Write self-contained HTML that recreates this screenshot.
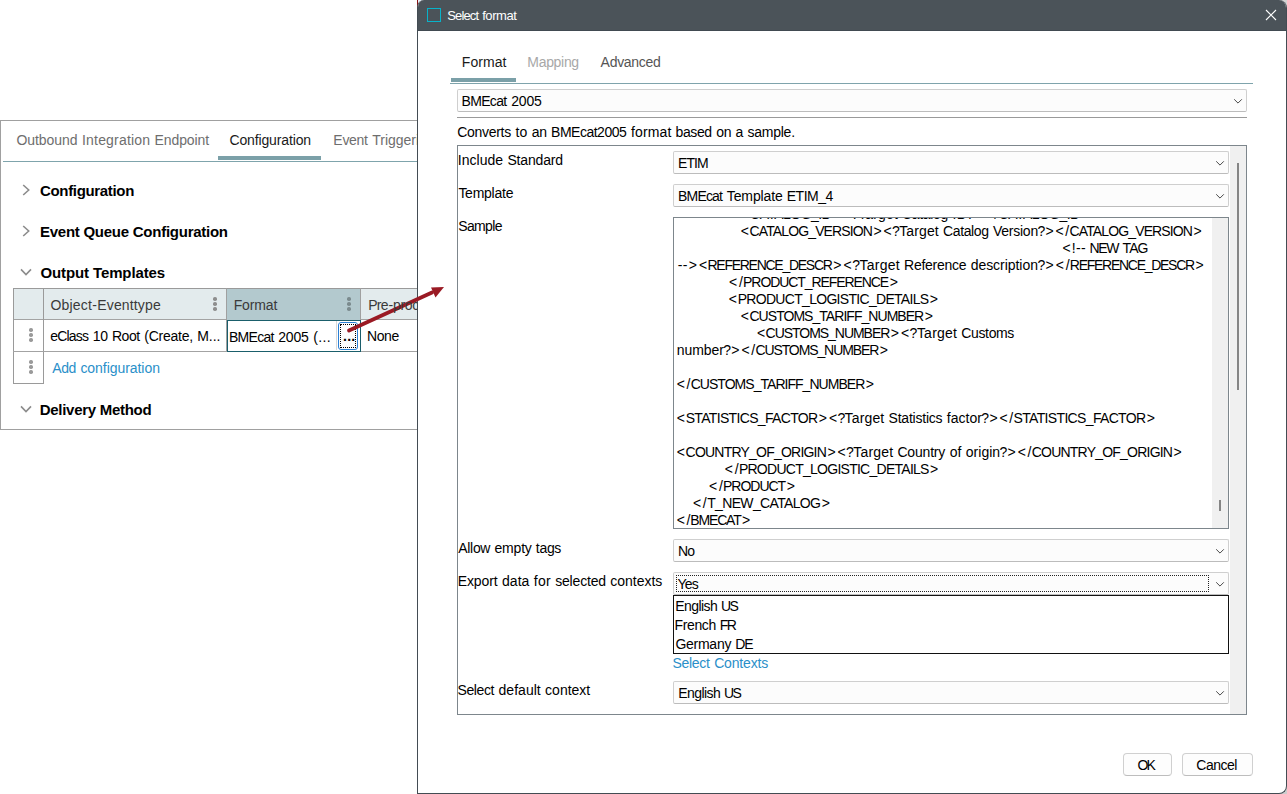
<!DOCTYPE html>
<html lang="en"><head><meta charset="utf-8"><title>Select format</title>
<style>
html,body{margin:0;padding:0;background:#fff;}
body{width:1287px;height:794px;position:relative;overflow:hidden;font-family:"Liberation Sans",sans-serif;font-size:14px;color:#000;}
.a{position:absolute;box-sizing:border-box;}
.t{position:absolute;white-space:pre;line-height:20px;height:20px;}
.t i{font-style:normal;display:inline-block;}
.sel{position:absolute;box-sizing:border-box;border:1px solid #cfcfcf;border-bottom-color:#bcbcbc;border-radius:2px;background:#fcfcfc;}
.dots{position:absolute;width:2px;}
.dots i{position:absolute;left:0;width:3px;height:3px;border-radius:50%;background:#8c8c8c;}
.btn{position:absolute;box-sizing:border-box;border:1px solid #d0d0d0;border-radius:4px;background:#fdfdfd;border-bottom-color:#bdbdbd;}
</style></head><body>

<div class="a" id="lp" style="left:0;top:120px;width:420px;height:310px;border:1px solid #a0a0a0;background:#fff;"></div>
<div class="a" style="left:3px;top:161px;width:415px;height:1px;background:#7fa4ac;"></div>
<div class="a" style="left:218px;top:156px;width:103px;height:4px;background:#7ba0a8;"></div>
<svg class="a" style="left:20px;top:182px" width="12" height="16" viewBox="0 0 12 16"><path d="M3.2 3 L8.7 8 L3.2 13" fill="none" stroke="#8c8c8c" stroke-width="1.6"/></svg>
<svg class="a" style="left:20px;top:223px" width="12" height="16" viewBox="0 0 12 16"><path d="M3.2 3 L8.7 8 L3.2 13" fill="none" stroke="#8c8c8c" stroke-width="1.6"/></svg>
<svg class="a" style="left:18px;top:266px" width="16" height="12" viewBox="0 0 16 12"><path d="M3 3.4 L8 8.5 L13 3.4" fill="none" stroke="#8c8c8c" stroke-width="1.6"/></svg>
<svg class="a" style="left:18px;top:403px" width="16" height="12" viewBox="0 0 16 12"><path d="M3 3.4 L8 8.5 L13 3.4" fill="none" stroke="#8c8c8c" stroke-width="1.6"/></svg>
<div class="a" style="left:13px;top:288px;width:407px;height:32px;background:#e3ebed;border-top:1px solid #9a9a9a;border-bottom:1px solid #a3a3a3;"></div>
<div class="a" style="left:227px;top:289px;width:134px;height:31px;background:#b3c9ce;"></div>
<div class="a" style="left:13px;top:288px;width:1px;height:96px;background:#9a9a9a;"></div>
<div class="a" style="left:43px;top:288px;width:1px;height:96px;background:#9a9a9a;"></div>
<div class="a" style="left:226px;top:288px;width:1px;height:64px;background:#a0a0a0;"></div>
<div class="a" style="left:360px;top:288px;width:1px;height:64px;background:#a0a0a0;"></div>
<div class="a" style="left:13px;top:351px;width:407px;height:1px;background:#a3a3a3;"></div>
<div class="a" style="left:13px;top:383px;width:31px;height:1px;background:#9a9a9a;"></div>
<div class="a" style="left:227px;top:320px;width:134px;height:32px;border:1px solid #1a5e6b;background:#fff;"></div>
<div class="a" style="left:336px;top:321px;width:1px;height:29px;background:#d8d8d8;"></div>
<div class="a" style="left:338px;top:322px;width:20px;height:28px;border:1px solid #2a7fd4;border-radius:3px;background:#fdfdfd;"></div>
<div class="a" style="left:340px;top:324px;width:16px;height:24px;border:1px dotted #000;"></div>
<span class="t" style="left:343px;top:326px;font-size:14px;font-weight:700;letter-spacing:0.25px;color:#000;">...</span>
<div class="dots" style="left:213.2px;top:297.2px;height:13.6px;"><i style="top:0px;width:3.6px;height:3.6px;background:#8e8e8e"></i><i style="top:5px;width:3.6px;height:3.6px;background:#8e8e8e"></i><i style="top:10px;width:3.6px;height:3.6px;background:#8e8e8e"></i></div>
<div class="dots" style="left:347.2px;top:297.2px;height:13.6px;"><i style="top:0px;width:3.6px;height:3.6px;background:#7b8b8e"></i><i style="top:5px;width:3.6px;height:3.6px;background:#7b8b8e"></i><i style="top:10px;width:3.6px;height:3.6px;background:#7b8b8e"></i></div>
<div class="dots" style="left:29.3px;top:328.3px;height:13.4px;"><i style="top:0px;width:3.4px;height:3.4px;background:#9a9a9a"></i><i style="top:5px;width:3.4px;height:3.4px;background:#9a9a9a"></i><i style="top:10px;width:3.4px;height:3.4px;background:#9a9a9a"></i></div>
<div class="dots" style="left:29.3px;top:360.3px;height:13.4px;"><i style="top:0px;width:3.4px;height:3.4px;background:#9a9a9a"></i><i style="top:5px;width:3.4px;height:3.4px;background:#9a9a9a"></i><i style="top:10px;width:3.4px;height:3.4px;background:#9a9a9a"></i></div>
<div class="a" style="left:1277px;top:0;width:10px;height:10px;background:#d4d4d4;"></div><div class="a" style="left:1277px;top:784px;width:10px;height:10px;background:#cdcdcd;"></div><div class="a" style="left:417px;top:0;width:8px;height:7px;background:#e8eef8;border-left:1px solid #8a1010;"></div><div class="a" id="dlg" style="left:417px;top:0;width:870px;height:794px;border:1px solid #434c53;border-top:none;border-radius:7px 8px 8px 0;background:#fff;overflow:hidden;"><div class="a" style="left:-1px;top:0;width:870px;height:31px;background:#4b5359;border-bottom:1px solid #414a51;"></div></div>
<div class="a" style="left:427px;top:8px;width:14px;height:14px;border:1.5px solid #08b3ca;"></div>
<svg class="a" style="left:1264px;top:8px" width="14" height="14" viewBox="0 0 14 14"><path d="M2 2 L12 12 M12 2 L2 12" stroke="#fff" stroke-width="1.1" fill="none"/></svg>
<div class="a" style="left:450px;top:83px;width:803px;height:1px;background:#7fa4ac;"></div>
<div class="a" style="left:451px;top:78px;width:65px;height:4px;background:#7ba0a8;"></div>
<div class="sel" style="left:457px;top:89px;width:790px;height:23px;"></div><svg class="a" style="left:1232px;top:95.8px" width="12" height="10" viewBox="0 0 12 10"><path d="M2.2 3.3 L6 7.1 L9.8 3.3" fill="none" stroke="#4a4a4a" stroke-width="1"/></svg>
<div class="a" style="left:457px;top:117px;width:790px;height:1px;background:#9a9a9a;"></div>
<div class="a" style="left:457px;top:145px;width:790px;height:570px;border:1px solid #7d868c;background:#fff;"></div>
<div class="a" style="left:1230px;top:146px;width:16px;height:568px;background:#f0f0f0;"></div>
<div class="a" style="left:1237px;top:163px;width:2px;height:227px;background:#858585;"></div>
<div class="sel" style="left:673px;top:151px;width:556px;height:23px;"></div><svg class="a" style="left:1214px;top:157.8px" width="12" height="10" viewBox="0 0 12 10"><path d="M2.2 3.3 L6 7.1 L9.8 3.3" fill="none" stroke="#4a4a4a" stroke-width="1"/></svg>
<div class="sel" style="left:673px;top:184px;width:556px;height:23px;"></div><svg class="a" style="left:1214px;top:190.8px" width="12" height="10" viewBox="0 0 12 10"><path d="M2.2 3.3 L6 7.1 L9.8 3.3" fill="none" stroke="#4a4a4a" stroke-width="1"/></svg>
<div class="a keep" id="ta" style="left:673px;top:217px;width:556px;height:312px;border:1px solid #7d868c;background:#fff;overflow:hidden;">
<div class="a" style="left:538px;top:0;width:16px;height:310px;background:#f0f0f0;"></div>
<div class="a" style="left:545px;top:282px;width:2px;height:11px;background:#858585;"></div>
<span class="t" id="ta0" style="left:66.3px;top:-14px;font-size:14px;color:#000;"><i id="ta0_0" style="letter-spacing:1.884px;margin:0 -0.942px 0 0.942px">&lt;</i><i id="ta0_1" style="letter-spacing:-0.562px;margin:0 0.281px 0 -0.281px">CATALOG_ID</i><i id="ta0_2" style="letter-spacing:1.884px;margin:0 -0.942px 0 0.942px">&gt;</i><i id="ta0_3" style="letter-spacing:1.884px;margin:0 -0.942px 0 0.942px">&lt;</i><i id="ta0_4" style="letter-spacing:-1.229px;margin:0 0.615px 0 -0.615px">?</i><i id="ta0_5" style="letter-spacing:0.16px;margin:0 -0.08px 0 0.08px">Target</i><i id="ta0_6" style="letter-spacing:0.439px;margin:0 -0.22px 0 0.22px"> </i><i id="ta0_7" style="letter-spacing:-0.353px;margin:0 0.176px 0 -0.176px">Catalog</i><i id="ta0_8" style="letter-spacing:0.439px;margin:0 -0.22px 0 0.22px"> </i><i id="ta0_9" style="letter-spacing:0.267px;margin:0 -0.134px 0 0.134px">ID</i><i id="ta0_10" style="letter-spacing:-1.229px;margin:0 0.615px 0 -0.615px">?</i><i id="ta0_11" style="letter-spacing:1.884px;margin:0 -0.942px 0 0.942px">&gt;</i><i id="ta0_12" style="letter-spacing:1.884px;margin:0 -0.942px 0 0.942px">&lt;</i><i id="ta0_13" style="letter-spacing:1.383px;margin:0 -0.692px 0 0.692px">/</i><i id="ta0_14" style="letter-spacing:-0.562px;margin:0 0.281px 0 -0.281px">CATALOG_ID</i><i id="ta0_15" style="letter-spacing:1.884px;margin:0 -0.942px 0 0.942px">&gt;</i></span>
<span class="t" id="ta1" style="left:65.9px;top:3px;font-size:14px;color:#000;"><i id="ta1_0" style="letter-spacing:1.853px;margin:0 -0.926px 0 0.926px">&lt;</i><i id="ta1_1" style="letter-spacing:-0.87px;margin:0 0.435px 0 -0.435px">CATALOG_VERSION</i><i id="ta1_2" style="letter-spacing:1.853px;margin:0 -0.926px 0 0.926px">&gt;</i><i id="ta1_3" style="letter-spacing:1.853px;margin:0 -0.926px 0 0.926px">&lt;</i><i id="ta1_4" style="letter-spacing:-1.257px;margin:0 0.628px 0 -0.628px">?</i><i id="ta1_5" style="letter-spacing:0.139px;margin:0 -0.07px 0 0.07px">Target</i><i id="ta1_6" style="letter-spacing:0.417px;margin:0 -0.208px 0 0.208px"> </i><i id="ta1_7" style="letter-spacing:-0.373px;margin:0 0.186px 0 -0.186px">Catalog</i><i id="ta1_8" style="letter-spacing:0.417px;margin:0 -0.208px 0 0.208px"> </i><i id="ta1_9" style="letter-spacing:-0.251px;margin:0 0.126px 0 -0.126px">Version</i><i id="ta1_10" style="letter-spacing:-1.257px;margin:0 0.628px 0 -0.628px">?</i><i id="ta1_11" style="letter-spacing:1.853px;margin:0 -0.926px 0 0.926px">&gt;</i><i id="ta1_12" style="letter-spacing:1.853px;margin:0 -0.926px 0 0.926px">&lt;</i><i id="ta1_13" style="letter-spacing:1.364px;margin:0 -0.682px 0 0.682px">/</i><i id="ta1_14" style="letter-spacing:-0.87px;margin:0 0.435px 0 -0.435px">CATALOG_VERSION</i><i id="ta1_15" style="letter-spacing:1.853px;margin:0 -0.926px 0 0.926px">&gt;</i></span>
<span class="t" id="ta2" style="left:387.7px;top:20px;font-size:14px;color:#000;"><i id="ta2_0" style="letter-spacing:1.652px;margin:0 -0.826px 0 0.826px">&lt;</i><i id="ta2_1" style="letter-spacing:0.355px;margin:0 -0.177px 0 0.177px">!--</i><i id="ta2_2" style="letter-spacing:0.329px;margin:0 -0.165px 0 0.165px"> </i><i id="ta2_3" style="letter-spacing:-1.3px;margin:0 0.65px 0 -0.65px">NEW</i><i id="ta2_4" style="letter-spacing:0.329px;margin:0 -0.165px 0 0.165px"> </i><i id="ta2_5" style="letter-spacing:-0.914px;margin:0 0.457px 0 -0.457px">TAG</i></span>
<span class="t" id="ta3" style="left:3.5px;top:37px;font-size:14px;color:#000;"><i id="ta3_0" style="letter-spacing:0.431px;margin:0 -0.215px 0 0.215px">--</i><i id="ta3_1" style="letter-spacing:2.043px;margin:0 -1.022px 0 1.022px">&gt;</i><i id="ta3_2" style="letter-spacing:2.043px;margin:0 -1.022px 0 1.022px">&lt;</i><i id="ta3_3" style="letter-spacing:-1.271px;margin:0 0.635px 0 -0.635px">REFERENCE_DESCR</i><i id="ta3_4" style="letter-spacing:2.043px;margin:0 -1.022px 0 1.022px">&gt;</i><i id="ta3_5" style="letter-spacing:2.043px;margin:0 -1.022px 0 1.022px">&lt;</i><i id="ta3_6" style="letter-spacing:-1.145px;margin:0 0.573px 0 -0.573px">?</i><i id="ta3_7" style="letter-spacing:0.256px;margin:0 -0.128px 0 0.128px">Target</i><i id="ta3_8" style="letter-spacing:0.491px;margin:0 -0.245px 0 0.245px"> </i><i id="ta3_9" style="letter-spacing:-0.28px;margin:0 0.14px 0 -0.14px">Reference</i><i id="ta3_10" style="letter-spacing:0.491px;margin:0 -0.245px 0 0.245px"> </i><i id="ta3_11" style="letter-spacing:-0.04px;margin:0 0.02px 0 -0.02px">description</i><i id="ta3_12" style="letter-spacing:-1.145px;margin:0 0.573px 0 -0.573px">?</i><i id="ta3_13" style="letter-spacing:2.043px;margin:0 -1.022px 0 1.022px">&gt;</i><i id="ta3_14" style="letter-spacing:2.043px;margin:0 -1.022px 0 1.022px">&lt;</i><i id="ta3_15" style="letter-spacing:1.467px;margin:0 -0.734px 0 0.734px">/</i><i id="ta3_16" style="letter-spacing:-1.271px;margin:0 0.635px 0 -0.635px">REFERENCE_DESCR</i><i id="ta3_17" style="letter-spacing:2.043px;margin:0 -1.022px 0 1.022px">&gt;</i></span>
<span class="t" id="ta4" style="left:53.9px;top:54px;font-size:14px;color:#000;"><i id="ta4_0" style="letter-spacing:2.151px;margin:0 -1.075px 0 1.075px">&lt;</i><i id="ta4_1" style="letter-spacing:1.522px;margin:0 -0.761px 0 0.761px">/</i><i id="ta4_2" style="letter-spacing:-1.08px;margin:0 0.54px 0 -0.54px">PRODUCT_REFERENCE</i><i id="ta4_3" style="letter-spacing:2.151px;margin:0 -1.075px 0 1.075px">&gt;</i></span>
<span class="t" id="ta5" style="left:53.9px;top:71px;font-size:14px;color:#000;"><i id="ta5_0" style="letter-spacing:1.958px;margin:0 -0.979px 0 0.979px">&lt;</i><i id="ta5_1" style="letter-spacing:-0.696px;margin:0 0.348px 0 -0.348px">PRODUCT_LOGISTIC_DETAILS</i><i id="ta5_2" style="letter-spacing:1.958px;margin:0 -0.979px 0 0.979px">&gt;</i></span>
<span class="t" id="ta6" style="left:65.9px;top:88px;font-size:14px;color:#000;"><i id="ta6_0" style="letter-spacing:1.844px;margin:0 -0.922px 0 0.922px">&lt;</i><i id="ta6_1" style="letter-spacing:-0.959px;margin:0 0.479px 0 -0.479px">CUSTOMS_TARIFF_NUMBER</i><i id="ta6_2" style="letter-spacing:1.844px;margin:0 -0.922px 0 0.922px">&gt;</i></span>
<span class="t" id="ta7" style="left:81.9px;top:105px;font-size:14px;color:#000;"><i id="ta7_0" style="letter-spacing:1.997px;margin:0 -0.999px 0 0.999px">&lt;</i><i id="ta7_1" style="letter-spacing:-1.036px;margin:0 0.518px 0 -0.518px">CUSTOMS_NUMBER</i><i id="ta7_2" style="letter-spacing:1.997px;margin:0 -0.999px 0 0.999px">&gt;</i><i id="ta7_3" style="letter-spacing:1.997px;margin:0 -0.999px 0 0.999px">&lt;</i><i id="ta7_4" style="letter-spacing:-1.171px;margin:0 0.586px 0 -0.586px">?</i><i id="ta7_5" style="letter-spacing:0.232px;margin:0 -0.116px 0 0.116px">Target</i><i id="ta7_6" style="letter-spacing:0.483px;margin:0 -0.241px 0 0.241px"> </i><i id="ta7_7" style="letter-spacing:-0.363px;margin:0 0.181px 0 -0.181px">Customs</i></span>
<span class="t" id="ta8" style="left:2.7px;top:122px;font-size:14px;color:#000;"><i id="ta8_0" style="letter-spacing:-0.056px;margin:0 0.028px 0 -0.028px">number</i><i id="ta8_1" style="letter-spacing:-1.219px;margin:0 0.61px 0 -0.61px">?</i><i id="ta8_2" style="letter-spacing:1.928px;margin:0 -0.964px 0 0.964px">&gt;</i><i id="ta8_3" style="letter-spacing:1.928px;margin:0 -0.964px 0 0.964px">&lt;</i><i id="ta8_4" style="letter-spacing:1.405px;margin:0 -0.703px 0 0.703px">/</i><i id="ta8_5" style="letter-spacing:-1.099px;margin:0 0.549px 0 -0.549px">CUSTOMS_NUMBER</i><i id="ta8_6" style="letter-spacing:1.928px;margin:0 -0.964px 0 0.964px">&gt;</i></span>
<span class="t" id="ta9" style="left:1.9px;top:156px;font-size:14px;color:#000;"><i id="ta9_0" style="letter-spacing:1.838px;margin:0 -0.919px 0 0.919px">&lt;</i><i id="ta9_1" style="letter-spacing:1.358px;margin:0 -0.679px 0 0.679px">/</i><i id="ta9_2" style="letter-spacing:-0.968px;margin:0 0.484px 0 -0.484px">CUSTOMS_TARIFF_NUMBER</i><i id="ta9_3" style="letter-spacing:1.838px;margin:0 -0.919px 0 0.919px">&gt;</i></span>
<span class="t" id="ta10" style="left:1.9px;top:190px;font-size:14px;color:#000;"><i id="ta10_0" style="letter-spacing:1.875px;margin:0 -0.938px 0 0.938px">&lt;</i><i id="ta10_1" style="letter-spacing:-0.66px;margin:0 0.33px 0 -0.33px">STATISTICS_FACTOR</i><i id="ta10_2" style="letter-spacing:1.875px;margin:0 -0.938px 0 0.938px">&gt;</i><i id="ta10_3" style="letter-spacing:1.875px;margin:0 -0.938px 0 0.938px">&lt;</i><i id="ta10_4" style="letter-spacing:-1.25px;margin:0 0.625px 0 -0.625px">?</i><i id="ta10_5" style="letter-spacing:0.149px;margin:0 -0.074px 0 0.074px">Target</i><i id="ta10_6" style="letter-spacing:0.426px;margin:0 -0.213px 0 0.213px"> </i><i id="ta10_7" style="letter-spacing:-0.222px;margin:0 0.111px 0 -0.111px">Statistics</i><i id="ta10_8" style="letter-spacing:0.426px;margin:0 -0.213px 0 0.213px"> </i><i id="ta10_9" style="letter-spacing:0.013px;margin:0 -0.006px 0 0.006px">factor</i><i id="ta10_10" style="letter-spacing:-1.25px;margin:0 0.625px 0 -0.625px">?</i><i id="ta10_11" style="letter-spacing:1.875px;margin:0 -0.938px 0 0.938px">&gt;</i><i id="ta10_12" style="letter-spacing:1.875px;margin:0 -0.938px 0 0.938px">&lt;</i><i id="ta10_13" style="letter-spacing:1.377px;margin:0 -0.689px 0 0.689px">/</i><i id="ta10_14" style="letter-spacing:-0.66px;margin:0 0.33px 0 -0.33px">STATISTICS_FACTOR</i><i id="ta10_15" style="letter-spacing:1.875px;margin:0 -0.938px 0 0.938px">&gt;</i></span>
<span class="t" id="ta11" style="left:1.9px;top:224px;font-size:14px;color:#000;"><i id="ta11_0" style="letter-spacing:1.904px;margin:0 -0.952px 0 0.952px">&lt;</i><i id="ta11_1" style="letter-spacing:-0.782px;margin:0 0.391px 0 -0.391px">COUNTRY_OF_ORIGIN</i><i id="ta11_2" style="letter-spacing:1.904px;margin:0 -0.952px 0 0.952px">&gt;</i><i id="ta11_3" style="letter-spacing:1.904px;margin:0 -0.952px 0 0.952px">&lt;</i><i id="ta11_4" style="letter-spacing:-1.231px;margin:0 0.616px 0 -0.616px">?</i><i id="ta11_5" style="letter-spacing:0.167px;margin:0 -0.084px 0 0.084px">Target</i><i id="ta11_6" style="letter-spacing:0.437px;margin:0 -0.218px 0 0.218px"> </i><i id="ta11_7" style="letter-spacing:-0.175px;margin:0 0.087px 0 -0.087px">Country</i><i id="ta11_8" style="letter-spacing:0.437px;margin:0 -0.218px 0 0.218px"> </i><i id="ta11_9" style="letter-spacing:0.117px;margin:0 -0.059px 0 0.059px">of</i><i id="ta11_10" style="letter-spacing:0.437px;margin:0 -0.218px 0 0.218px"> </i><i id="ta11_11" style="letter-spacing:-0.003px;margin:0 0.002px 0 -0.002px">origin</i><i id="ta11_12" style="letter-spacing:-1.231px;margin:0 0.616px 0 -0.616px">?</i><i id="ta11_13" style="letter-spacing:1.904px;margin:0 -0.952px 0 0.952px">&gt;</i><i id="ta11_14" style="letter-spacing:1.904px;margin:0 -0.952px 0 0.952px">&lt;</i><i id="ta11_15" style="letter-spacing:1.391px;margin:0 -0.696px 0 0.696px">/</i><i id="ta11_16" style="letter-spacing:-0.782px;margin:0 0.391px 0 -0.391px">COUNTRY_OF_ORIGIN</i><i id="ta11_17" style="letter-spacing:1.904px;margin:0 -0.952px 0 0.952px">&gt;</i></span>
<span class="t" id="ta12" style="left:49.9px;top:241px;font-size:14px;color:#000;"><i id="ta12_0" style="letter-spacing:1.899px;margin:0 -0.95px 0 0.95px">&lt;</i><i id="ta12_1" style="letter-spacing:1.388px;margin:0 -0.694px 0 0.694px">/</i><i id="ta12_2" style="letter-spacing:-0.735px;margin:0 0.367px 0 -0.367px">PRODUCT_LOGISTIC_DETAILS</i><i id="ta12_3" style="letter-spacing:1.899px;margin:0 -0.95px 0 0.95px">&gt;</i></span>
<span class="t" id="ta13" style="left:33.9px;top:258px;font-size:14px;color:#000;"><i id="ta13_0" style="letter-spacing:2.083px;margin:0 -1.042px 0 1.042px">&lt;</i><i id="ta13_1" style="letter-spacing:1.486px;margin:0 -0.743px 0 0.743px">/</i><i id="ta13_2" style="letter-spacing:-1.023px;margin:0 0.511px 0 -0.511px">PRODUCT</i><i id="ta13_3" style="letter-spacing:2.083px;margin:0 -1.042px 0 1.042px">&gt;</i></span>
<span class="t" id="ta14" style="left:17.9px;top:275px;font-size:14px;color:#000;"><i id="ta14_0" style="letter-spacing:2.037px;margin:0 -1.018px 0 1.018px">&lt;</i><i id="ta14_1" style="letter-spacing:1.464px;margin:0 -0.732px 0 0.732px">/</i><i id="ta14_2" style="letter-spacing:-0.647px;margin:0 0.324px 0 -0.324px">T_NEW_CATALOG</i><i id="ta14_3" style="letter-spacing:2.037px;margin:0 -1.018px 0 1.018px">&gt;</i></span>
<span class="t" id="ta15" style="left:1.9px;top:292px;font-size:14px;color:#000;"><i id="ta15_0" style="letter-spacing:1.689px;margin:0 -0.845px 0 0.845px">&lt;</i><i id="ta15_1" style="letter-spacing:1.278px;margin:0 -0.639px 0 0.639px">/</i><i id="ta15_2" style="letter-spacing:-1.174px;margin:0 0.587px 0 -0.587px">BMECAT</i><i id="ta15_3" style="letter-spacing:1.689px;margin:0 -0.845px 0 0.845px">&gt;</i></span>
</div>
<div class="sel" style="left:673px;top:539px;width:556px;height:23px;"></div><svg class="a" style="left:1214px;top:545.8px" width="12" height="10" viewBox="0 0 12 10"><path d="M2.2 3.3 L6 7.1 L9.8 3.3" fill="none" stroke="#4a4a4a" stroke-width="1"/></svg>
<div class="sel" style="left:673px;top:572px;width:556px;height:23px;"></div><svg class="a" style="left:1214px;top:578.8px" width="12" height="10" viewBox="0 0 12 10"><path d="M2.2 3.3 L6 7.1 L9.8 3.3" fill="none" stroke="#4a4a4a" stroke-width="1"/></svg>
<div class="a" style="left:676px;top:575px;width:533px;height:17px;border:1px dotted #222;"></div>
<div class="a" style="left:673px;top:595px;width:556px;height:59px;border:1px solid #111;background:#fff;"></div>
<div class="sel" style="left:673px;top:681px;width:556px;height:23px;"></div><svg class="a" style="left:1214px;top:687.8px" width="12" height="10" viewBox="0 0 12 10"><path d="M2.2 3.3 L6 7.1 L9.8 3.3" fill="none" stroke="#4a4a4a" stroke-width="1"/></svg>
<div class="btn" style="left:1123px;top:753px;width:49px;height:23px;"></div>
<div class="btn" style="left:1182px;top:753px;width:71px;height:23px;"></div>
<svg class="a" style="left:340px;top:280px" width="110" height="60" viewBox="340 280 110 60"><path d="M349 330.5 L432 292.5" stroke="#9a1a24" stroke-width="3.8" stroke-linecap="round" fill="none"/><path d="M444 287 L431 287.5 L435.5 297.5 Z" fill="#9a1a24"/></svg>
<div class="a keep" style="left:0;top:0;width:417px;height:794px;overflow:hidden;">
<span class="t" id="t0" style="left:16.5px;top:130.0px;font-size:14px;color:#6e6e6e;"><i id="t0_0" style="letter-spacing:-0.063px;margin:0 0.032px 0 -0.032px">Outbound</i><i id="t0_1" style="letter-spacing:0.482px;margin:0 -0.241px 0 0.241px"> </i><i id="t0_2" style="letter-spacing:0.201px;margin:0 -0.101px 0 0.101px">Integration</i><i id="t0_3" style="letter-spacing:0.482px;margin:0 -0.241px 0 0.241px"> </i><i id="t0_4" style="letter-spacing:-0.116px;margin:0 0.058px 0 -0.058px">Endpoint</i></span>
<span class="t" id="t1" style="left:229.5px;top:130.0px;font-size:14px;color:#1a1a1a;"><i id="t1_0" style="letter-spacing:-0.131px;margin:0 0.066px 0 -0.066px">Configuration</i></span>
<span class="t" id="t2" style="left:333.5px;top:130.0px;font-size:14px;color:#6e6e6e;"><i id="t2_0" style="letter-spacing:-0.29px;margin:0 0.145px 0 -0.145px">Event</i><i id="t2_1" style="letter-spacing:0.437px;margin:0 -0.218px 0 0.218px"> </i><i id="t2_2" style="letter-spacing:-0.003px;margin:0 0.002px 0 -0.002px">Triggering</i><i id="t2_3" style="letter-spacing:0.437px;margin:0 -0.218px 0 0.218px"> </i><i id="t2_4" style="letter-spacing:-0.082px;margin:0 0.041px 0 -0.041px">Definitions</i></span>
<span class="t" id="t3" style="left:39.98px;top:180.5px;font-size:15px;color:#000;font-weight:700;letter-spacing:-0.329px;">Configuration</span>
<span class="t" id="t4" style="left:39.98px;top:221.5px;font-size:15px;color:#000;font-weight:700;letter-spacing:-0.255px;">Event Queue Configuration</span>
<span class="t" id="t5" style="left:40.52px;top:262.5px;font-size:15px;color:#000;font-weight:700;letter-spacing:-0.119px;">Output Templates</span>
<span class="t" id="t6" style="left:39.72px;top:399.5px;font-size:15px;color:#000;font-weight:700;letter-spacing:-0.288px;">Delivery Method</span>
<span class="t" id="t7" style="left:50.42px;top:295.0px;font-size:14px;color:#3a3a3a;"><i id="t7_0" style="letter-spacing:0.175px;margin:0 -0.087px 0 0.087px">Object</i><i id="t7_1" style="letter-spacing:0.6px;margin:0 -0.3px 0 0.3px">-</i><i id="t7_2" style="letter-spacing:0.149px;margin:0 -0.074px 0 0.074px">Eventtype</i></span>
<span class="t" id="t8" style="left:233.7px;top:295.0px;font-size:14px;color:#3a3a3a;"><i id="t8_0" style="letter-spacing:-0.125px;margin:0 0.062px 0 -0.062px">Format</i></span>
<span class="t" id="t9" style="left:368.5px;top:295.0px;font-size:14px;color:#3a3a3a;"><i id="t9_0" style="letter-spacing:-0.679px;margin:0 0.34px 0 -0.34px">Pre</i><i id="t9_1" style="letter-spacing:0.319px;margin:0 -0.16px 0 0.16px">-</i><i id="t9_2" style="letter-spacing:-0.358px;margin:0 0.179px 0 -0.179px">processor</i></span>
<span class="t" id="t10" style="left:50.58px;top:326.0px;font-size:14px;color:#000;"><i id="t10_0" style="letter-spacing:-0.807px;margin:0 0.404px 0 -0.404px">eClass</i><i id="t10_1" style="letter-spacing:0.394px;margin:0 -0.197px 0 0.197px"> </i><i id="t10_2" style="letter-spacing:-0.314px;margin:0 0.157px 0 -0.157px">10</i><i id="t10_3" style="letter-spacing:0.394px;margin:0 -0.197px 0 0.197px"> </i><i id="t10_4" style="letter-spacing:-0.41px;margin:0 0.205px 0 -0.205px">Root</i><i id="t10_5" style="letter-spacing:0.394px;margin:0 -0.197px 0 0.197px"> </i><i id="t10_6" style="letter-spacing:-0.236px;margin:0 0.118px 0 -0.118px">(Create,</i><i id="t10_7" style="letter-spacing:0.394px;margin:0 -0.197px 0 0.197px"> </i><i id="t10_8" style="letter-spacing:-0.085px;margin:0 0.043px 0 -0.043px">M...</i></span>
<span class="t" id="t11" style="left:229.28px;top:327.0px;font-size:14px;color:#000;"><i id="t11_0" style="letter-spacing:-0.699px;margin:0 0.349px 0 -0.349px">BMEcat</i><i id="t11_1" style="letter-spacing:0.438px;margin:0 -0.219px 0 0.219px"> </i><i id="t11_2" style="letter-spacing:-0.234px;margin:0 0.117px 0 -0.117px">2005</i><i id="t11_3" style="letter-spacing:0.438px;margin:0 -0.219px 0 0.219px"> </i><i id="t11_4" style="letter-spacing:0.382px;margin:0 -0.191px 0 0.191px">(...</i></span>
<span class="t" id="t12" style="left:367.14px;top:326.0px;font-size:14px;color:#000;"><i id="t12_0" style="letter-spacing:-0.402px;margin:0 0.201px 0 -0.201px">None</i></span>
<span class="t" id="t13" style="left:52.58px;top:358.0px;font-size:14px;color:#2a8fc9;"><i id="t13_0" style="letter-spacing:-0.465px;margin:0 0.233px 0 -0.233px">Add</i><i id="t13_1" style="letter-spacing:0.419px;margin:0 -0.209px 0 0.209px"> </i><i id="t13_2" style="letter-spacing:-0.05px;margin:0 0.025px 0 -0.025px">configuration</i></span>
</div>
<span class="t" id="t14" style="left:447.62px;top:5.5px;font-size:13px;color:#fff;"><i id="t14_0" style="letter-spacing:-0.852px;margin:0 0.426px 0 -0.426px">Select</i><i id="t14_1" style="letter-spacing:0.075px;margin:0 -0.037px 0 0.037px"> </i><i id="t14_2" style="letter-spacing:-0.406px;margin:0 0.203px 0 -0.203px">format</i></span>
<span class="t" id="t15" style="left:461.76px;top:52.0px;font-size:14px;color:#1a1a1a;"><i id="t15_0" style="letter-spacing:0.067px;margin:0 -0.034px 0 0.034px">Format</i></span>
<span class="t" id="t16" style="left:527.44px;top:52.0px;font-size:14px;color:#a8a8a8;"><i id="t16_0" style="letter-spacing:-0.309px;margin:0 0.154px 0 -0.154px">Mapping</i></span>
<span class="t" id="t17" style="left:600.74px;top:52.0px;font-size:14px;color:#555;"><i id="t17_0" style="letter-spacing:-0.287px;margin:0 0.143px 0 -0.143px">Advanced</i></span>
<span class="t" id="t18" style="left:461.76px;top:91.0px;font-size:14px;color:#000;"><i id="t18_0" style="letter-spacing:-0.647px;margin:0 0.324px 0 -0.324px">BMEcat</i><i id="t18_1" style="letter-spacing:0.47px;margin:0 -0.235px 0 0.235px"> </i><i id="t18_2" style="letter-spacing:-0.184px;margin:0 0.092px 0 -0.092px">2005</i></span>
<span class="t" id="t19" style="left:457.38px;top:121.5px;font-size:14px;color:#000;"><i id="t19_0" style="letter-spacing:-0.297px;margin:0 0.148px 0 -0.148px">Converts</i><i id="t19_1" style="letter-spacing:0.453px;margin:0 -0.227px 0 0.227px"> </i><i id="t19_2" style="letter-spacing:0.241px;margin:0 -0.12px 0 0.12px">to</i><i id="t19_3" style="letter-spacing:0.453px;margin:0 -0.227px 0 0.227px"> </i><i id="t19_4" style="letter-spacing:-0.275px;margin:0 0.138px 0 -0.138px">an</i><i id="t19_5" style="letter-spacing:0.453px;margin:0 -0.227px 0 0.227px"> </i><i id="t19_6" style="letter-spacing:-0.487px;margin:0 0.243px 0 -0.243px">BMEcat2005</i><i id="t19_7" style="letter-spacing:0.453px;margin:0 -0.227px 0 0.227px"> </i><i id="t19_8" style="letter-spacing:0.139px;margin:0 -0.07px 0 0.07px">format</i><i id="t19_9" style="letter-spacing:0.453px;margin:0 -0.227px 0 0.227px"> </i><i id="t19_10" style="letter-spacing:-0.405px;margin:0 0.203px 0 -0.203px">based</i><i id="t19_11" style="letter-spacing:0.453px;margin:0 -0.227px 0 0.227px"> </i><i id="t19_12" style="letter-spacing:-0.148px;margin:0 0.074px 0 -0.074px">on</i><i id="t19_13" style="letter-spacing:0.453px;margin:0 -0.227px 0 0.227px"> </i><i id="t19_14" style="letter-spacing:-0.508px;margin:0 0.254px 0 -0.254px">a</i><i id="t19_15" style="letter-spacing:0.453px;margin:0 -0.227px 0 0.227px"> </i><i id="t19_16" style="letter-spacing:-0.219px;margin:0 0.11px 0 -0.11px">sample.</i></span>
<span class="t" id="t20" style="left:457.7px;top:150.0px;font-size:14px;color:#000;"><i id="t20_0" style="letter-spacing:0.049px;margin:0 -0.025px 0 0.025px">Include</i><i id="t20_1" style="letter-spacing:0.469px;margin:0 -0.234px 0 0.234px"> </i><i id="t20_2" style="letter-spacing:-0.184px;margin:0 0.092px 0 -0.092px">Standard</i></span>
<span class="t" id="t21" style="left:458.5px;top:183.0px;font-size:14px;color:#000;"><i id="t21_0" style="letter-spacing:-0.252px;margin:0 0.126px 0 -0.126px">Template</i></span>
<span class="t" id="t22" style="left:458.5px;top:216.0px;font-size:14px;color:#000;"><i id="t22_0" style="letter-spacing:-0.647px;margin:0 0.324px 0 -0.324px">Sample</i></span>
<span class="t" id="t23" style="left:458.5px;top:538.0px;font-size:14px;color:#000;"><i id="t23_0" style="letter-spacing:-0.34px;margin:0 0.17px 0 -0.17px">Allow</i><i id="t23_1" style="letter-spacing:0.338px;margin:0 -0.169px 0 0.169px"> </i><i id="t23_2" style="letter-spacing:-0.17px;margin:0 0.085px 0 -0.085px">empty</i><i id="t23_3" style="letter-spacing:0.338px;margin:0 -0.169px 0 0.169px"> </i><i id="t23_4" style="letter-spacing:-0.321px;margin:0 0.161px 0 -0.161px">tags</i></span>
<span class="t" id="t24" style="left:457.7px;top:571.0px;font-size:14px;color:#000;"><i id="t24_0" style="letter-spacing:-0.078px;margin:0 0.039px 0 -0.039px">Export</i><i id="t24_1" style="letter-spacing:0.509px;margin:0 -0.255px 0 0.255px"> </i><i id="t24_2" style="letter-spacing:-0.005px;margin:0 0.003px 0 -0.003px">data</i><i id="t24_3" style="letter-spacing:0.509px;margin:0 -0.255px 0 0.255px"> </i><i id="t24_4" style="letter-spacing:0.275px;margin:0 -0.138px 0 0.138px">for</i><i id="t24_5" style="letter-spacing:0.509px;margin:0 -0.255px 0 0.255px"> </i><i id="t24_6" style="letter-spacing:-0.192px;margin:0 0.096px 0 -0.096px">selected</i><i id="t24_7" style="letter-spacing:0.509px;margin:0 -0.255px 0 0.255px"> </i><i id="t24_8" style="letter-spacing:-0.022px;margin:0 0.011px 0 -0.011px">contexts</i></span>
<span class="t" id="t25" style="left:457.7px;top:680.0px;font-size:14px;color:#000;"><i id="t25_0" style="letter-spacing:-0.398px;margin:0 0.199px 0 -0.199px">Select</i><i id="t25_1" style="letter-spacing:0.444px;margin:0 -0.222px 0 0.222px"> </i><i id="t25_2" style="letter-spacing:0.024px;margin:0 -0.012px 0 0.012px">default</i><i id="t25_3" style="letter-spacing:0.444px;margin:0 -0.222px 0 0.222px"> </i><i id="t25_4" style="letter-spacing:-0.006px;margin:0 0.003px 0 -0.003px">context</i></span>
<span class="t" id="t26" style="left:678.5px;top:153.0px;font-size:14px;color:#000;"><i id="t26_0" style="letter-spacing:-0.947px;margin:0 0.473px 0 -0.473px">ETIM</i></span>
<span class="t" id="t27" style="left:678.5px;top:186.0px;font-size:14px;color:#000;"><i id="t27_0" style="letter-spacing:-0.828px;margin:0 0.414px 0 -0.414px">BMEcat</i><i id="t27_1" style="letter-spacing:0.358px;margin:0 -0.179px 0 0.179px"> </i><i id="t27_2" style="letter-spacing:-0.106px;margin:0 0.053px 0 -0.053px">Template</i><i id="t27_3" style="letter-spacing:0.358px;margin:0 -0.179px 0 0.179px"> </i><i id="t27_4" style="letter-spacing:-0.51px;margin:0 0.255px 0 -0.255px">ETIM_4</i></span>
<span class="t" id="t28" style="left:678.5px;top:541.0px;font-size:14px;color:#000;"><i id="t28_0" style="letter-spacing:-0.964px;margin:0 0.482px 0 -0.482px">No</i></span>
<span class="t" id="t29" style="left:678.02px;top:574.0px;font-size:14px;color:#000;"><i id="t29_0" style="letter-spacing:-0.885px;margin:0 0.443px 0 -0.443px">Yes</i></span>
<span class="t" id="t30" style="left:675.5px;top:596.0px;font-size:14px;color:#000;"><i id="t30_0" style="letter-spacing:-0.552px;margin:0 0.276px 0 -0.276px">English</i><i id="t30_1" style="letter-spacing:0.311px;margin:0 -0.155px 0 0.155px"> </i><i id="t30_2" style="letter-spacing:-1.587px;margin:0 0.793px 0 -0.793px">US</i></span>
<span class="t" id="t31" style="left:674.7px;top:615.0px;font-size:14px;color:#000;"><i id="t31_0" style="letter-spacing:-0.366px;margin:0 0.183px 0 -0.183px">French</i><i id="t31_1" style="letter-spacing:0.445px;margin:0 -0.223px 0 0.223px"> </i><i id="t31_2" style="letter-spacing:-1.417px;margin:0 0.709px 0 -0.709px">FR</i></span>
<span class="t" id="t32" style="left:675.5px;top:634.0px;font-size:14px;color:#000;"><i id="t32_0" style="letter-spacing:-0.257px;margin:0 0.129px 0 -0.129px">Germany</i><i id="t32_1" style="letter-spacing:0.494px;margin:0 -0.247px 0 0.247px"> </i><i id="t32_2" style="letter-spacing:-1.037px;margin:0 0.518px 0 -0.518px">DE</i></span>
<span class="t" id="t33" style="left:672.7px;top:653.0px;font-size:14px;color:#2a8fc9;"><i id="t33_0" style="letter-spacing:-0.305px;margin:0 0.152px 0 -0.152px">Select</i><i id="t33_1" style="letter-spacing:0.511px;margin:0 -0.256px 0 0.256px"> </i><i id="t33_2" style="letter-spacing:-0.15px;margin:0 0.075px 0 -0.075px">Contexts</i></span>
<span class="t" id="t34" style="left:678.5px;top:683.0px;font-size:14px;color:#000;"><i id="t34_0" style="letter-spacing:-0.552px;margin:0 0.276px 0 -0.276px">English</i><i id="t34_1" style="letter-spacing:0.311px;margin:0 -0.155px 0 0.155px"> </i><i id="t34_2" style="letter-spacing:-1.587px;margin:0 0.793px 0 -0.793px">US</i></span>
<span class="t" id="t35" style="left:1138.44px;top:755.0px;font-size:14px;color:#000;"><i id="t35_0" style="letter-spacing:-1.846px;margin:0 0.923px 0 -0.923px">OK</i></span>
<span class="t" id="t36" style="left:1196.6px;top:755.0px;font-size:14px;color:#000;"><i id="t36_0" style="letter-spacing:-0.512px;margin:0 0.256px 0 -0.256px">Cancel</i></span>
</body></html>
